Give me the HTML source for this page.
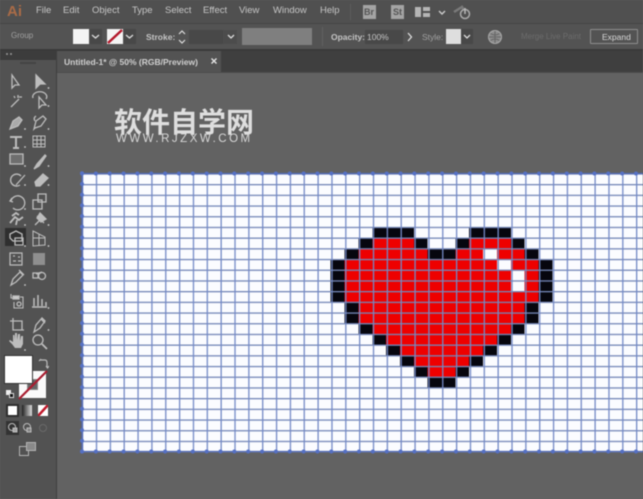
<!DOCTYPE html>
<html><head><meta charset="utf-8">
<style>
html,body{margin:0;padding:0;background:#626262}
#w{width:643px;height:499px;overflow:hidden;position:relative}
#p{position:relative;width:643px;height:499px;overflow:hidden;background:#626262;font-family:"Liberation Sans",sans-serif;color:#c6c6c6;filter:blur(0.5px)}
.r{position:absolute}
.t{position:absolute;white-space:nowrap;font-size:9.5px;line-height:12px}
#fx{position:absolute;left:0;top:0}
</style></head><body><div id="w"><div id="p">
<div class="r" style="left:0;top:0;width:643px;height:23px;background:#505050"></div>
<div class="r" style="left:0;top:23px;width:643px;height:1px;background:#444"></div>
<div class="r" style="left:0;top:24px;width:643px;height:26px;background:#535353"></div>
<div class="r" style="left:0;top:49px;width:643px;height:2px;background:#3a3a3a"></div>
<div class="r" style="left:57px;top:51px;width:586px;height:21px;background:#3f3f3f"></div>
<div class="r" style="left:57px;top:51px;width:164px;height:21px;background:#535353"></div>
<div class="r" style="left:57px;top:72px;width:586px;height:1px;background:#4c4c4c"></div>
<div class="r" style="left:0;top:51px;width:56px;height:448px;background:#525252"></div>
<div class="r" style="left:0;top:51px;width:56px;height:9px;background:#3c3c3c"></div>
<div class="r" style="left:56px;top:51px;width:1px;height:448px;background:#3e3e3e"></div>
<div class="r" style="left:20px;top:62px;width:16px;height:2px;background:#444"></div>

<div class="t" style="left:7px;top:3px;font-size:15px;line-height:18px;font-weight:bold;color:#a96b47">Ai</div>
<div class="t" style="left:36px;top:5px">File</div>
<div class="t" style="left:63px;top:5px">Edit</div>
<div class="t" style="left:92px;top:5px">Object</div>
<div class="t" style="left:132px;top:5px">Type</div>
<div class="t" style="left:165px;top:5px">Select</div>
<div class="t" style="left:203px;top:5px">Effect</div>
<div class="t" style="left:239px;top:5px">View</div>
<div class="t" style="left:273px;top:5px">Window</div>
<div class="t" style="left:320px;top:5px">Help</div>
<div class="r" style="left:350px;top:4px;width:1px;height:16px;background:#5c5c5c"></div>

<div class="r" style="left:363px;top:5px;width:13px;height:14px;background:#a4a4a4"></div>
<div class="t" style="left:364px;top:6px;font-size:9px;font-weight:bold;color:#555">Br</div>
<div class="r" style="left:391px;top:5px;width:13px;height:14px;background:#a4a4a4"></div>
<div class="t" style="left:393px;top:6px;font-size:9px;font-weight:bold;color:#555">St</div>
<svg class="r" style="left:414px;top:5px" width="40" height="14"><path d="M1 2h6v10H1zM9 2h7v4H9zM9 8h7v4H9z" fill="#b5b5b5"/><path d="M25 6l3 3 3-3" fill="none" stroke="#ccc" stroke-width="1.400"/></svg>
<svg class="r" style="left:452px;top:3px" width="22" height="18"><path d="M2 9l8-5 2 3" fill="none" stroke="#7a7a7a" stroke-width="2.500"/><circle cx="13" cy="11" r="4.500" fill="none" stroke="#aaa" stroke-width="1.500"/><path d="M13 5v6" stroke="#bbb" stroke-width="1.500"/></svg>

<div class="t" style="left:11px;top:30px;font-size:8px;color:#a0a0a0">Group</div>
<div class="r" style="left:73px;top:29px;width:16px;height:15px;background:#f4f4f4"></div>
<div class="r" style="left:90px;top:29px;width:12px;height:15px;background:#484848"></div>
<div class="r" style="left:107px;top:29px;width:16px;height:15px;background:#f4f4f4"></div>
<svg class="r" style="left:107px;top:29px" width="16" height="15"><path d="M1 14L15 1" stroke="#b3182a" stroke-width="2.400"/></svg>
<div class="r" style="left:124px;top:29px;width:12px;height:15px;background:#484848"></div>
<svg class="r" style="left:90px;top:33px" width="46" height="8"><path d="M2 2l3.500 3 3.500-3M36 2l3.500 3 3.500-3" fill="none" stroke="#ddd" stroke-width="1.300"/></svg>
<div class="t" style="left:146px;top:31px;font-size:8.500px;font-weight:bold;color:#c4c4c4">Stroke:</div>
<svg class="r" style="left:176px;top:29px" width="12" height="16"><path d="M3 5l3-3 3 3M3 11l3 3 3-3" fill="none" stroke="#ddd" stroke-width="1.200"/></svg>
<div class="r" style="left:189px;top:30px;width:34px;height:14px;background:#484848"></div>
<div class="r" style="left:223px;top:30px;width:14px;height:14px;background:#4c4c4c"></div>
<svg class="r" style="left:226px;top:34px" width="10" height="7"><path d="M2 1l3 3 3-3" fill="none" stroke="#ddd" stroke-width="1.300"/></svg>
<div class="r" style="left:242px;top:28px;width:70px;height:17px;background:#7f7f7f"></div>
<div class="r" style="left:322px;top:27px;width:1px;height:19px;background:#606060"></div>
<div class="t" style="left:331px;top:31px;font-size:8.500px;font-weight:bold;color:#c4c4c4">Opacity:</div>
<div class="r" style="left:365px;top:30px;width:38px;height:14px;background:#484848"></div>
<div class="t" style="left:367px;top:31px;font-size:8.500px;color:#c4c4c4">100%</div>
<svg class="r" style="left:405px;top:32px" width="10" height="10"><path d="M3 1l3.500 4L3 9" fill="none" stroke="#ddd" stroke-width="1.300"/></svg>
<div class="t" style="left:422px;top:31px;font-size:8.500px;color:#a0a0a0">Style:</div>
<div class="r" style="left:446px;top:29px;width:15px;height:15px;background:#dedede"></div>
<div class="r" style="left:461px;top:29px;width:12px;height:15px;background:#484848"></div>
<svg class="r" style="left:462px;top:34px" width="10" height="7"><path d="M2 1l3 3 3-3" fill="none" stroke="#ddd" stroke-width="1.300"/></svg>
<svg class="r" style="left:487px;top:29px" width="16" height="16"><circle cx="8" cy="8" r="6.500" fill="#8d8d8d" stroke="#aaa"/><path d="M8 2v12M2 8h12M3.500 4.500q4.500 3 9 0M3.500 11.500q4.500-3 9 0" fill="none" stroke="#666"/></svg>
<div class="t" style="left:521px;top:31px;font-size:8px;color:#6c6c6c">Merge Live Paint</div>
<div class="r" style="left:590px;top:29px;width:48px;height:15px;border:1px solid #8e8e8e;box-sizing:border-box;border-radius:1px"></div>
<div class="t" style="left:602px;top:31px;font-size:8.500px;color:#d8d8d8">Expand</div>

<div class="t" style="left:64px;top:56px;font-size:8.500px;font-weight:bold;color:#d0d0d0">Untitled-1* @ 50% (RGB/Preview)</div>
<svg class="r" style="left:210px;top:57px" width="8" height="8"><path d="M1.500 1.500l5 5M6.500 1.500l-5 5" stroke="#e5e5e5" stroke-width="1.400"/></svg>
<svg class="r" style="left:5px;top:51px" width="8" height="6"><circle cx="2" cy="3" r="1" fill="#999"/><circle cx="6" cy="3" r="1" fill="#999"/></svg>

<div class="r" style="left:5px;top:228px;width:21px;height:18px;background:#2f2f2f"></div>
<svg class="r" style="left:0;top:70px" width="56" height="300" fill="none" stroke="#bdbdbd" stroke-width="1.300">
<path d="M12 5v13l3-3 4 0z"/><path d="M36 5v13l4-4 5 0z" fill="#bdbdbd"/><circle cx="48.500" cy="18" r=".9" fill="#ccc" stroke="none"/>
<path d="M11 37l8-8M18 25v3M22 27h-3M14 26l1 2"/><path d="M33 28a7 5 0 1 1 13 1M39 27v11l3-3 4 0z"/><circle cx="48.500" cy="36" r=".9" fill="#ccc" stroke="none"/>
<path d="M10 59l3-8 6-4 3 3-4 6z" fill="#aaa"/><path d="M34 59l2-8 7-5 3 3-5 7-6 2zM36 46q-3 2-1 5"/><circle cx="25" cy="59" r=".9" fill="#ccc" stroke="none"/><circle cx="48.500" cy="59" r=".9" fill="#ccc" stroke="none"/>
<path d="M10 67h12M16 67v11M13 78h6" stroke-width="2"/><path d="M33 66h12v11H33zM33 70h12M33 74h12M37 66v11M41 66v11" stroke-width="1"/><circle cx="25" cy="77" r=".9" fill="#ccc" stroke="none"/>
<path d="M10 84h13v10H10z" fill="#6e6e6e"/><path d="M34 99l3-5 8-9 1 1-7 10z" fill="#bdbdbd"/><circle cx="25" cy="96" r=".9" fill="#ccc" stroke="none"/><circle cx="48.500" cy="96" r=".9" fill="#ccc" stroke="none"/>
<path d="M21 106a6 6 0 1 0-1 9M16 115l9-10"/><path d="M35 112l8-8 5 4-8 8-4 0z" fill="#bdbdbd"/><circle cx="25" cy="115" r=".9" fill="#ccc" stroke="none"/><circle cx="48.500" cy="115" r=".9" fill="#ccc" stroke="none"/>
<path d="M12 128l-2 3 3 1M11 131a7 7 0 1 1 2 7"/><path d="M33 130h9v9h-9zM38 124h8v8h-8z"/><circle cx="25" cy="139" r=".9" fill="#ccc" stroke="none"/>
<path d="M10 153l5-6 4 3 4-3M12 146l4-3 3 2M17 150l-1 5" stroke-width="1.800"/><path d="M35 155l5-5M37 146l7 7M40 143l6 6-5 3-4-4z" fill="#bdbdbd"/><circle cx="25" cy="155" r=".9" fill="#ccc" stroke="none"/><circle cx="48.500" cy="155" r=".9" fill="#ccc" stroke="none"/>
<path d="M10 164l6-3 6 3v7H13l-3-3zM15 168h8v7h-8z"/><path d="M33 161l12 6v8l-12 1zM33 168h12M39 164v11" stroke-width="1"/><circle cx="25" cy="176" r=".9" fill="#ccc" stroke="none"/><circle cx="48.500" cy="176" r=".9" fill="#ccc" stroke="none"/>
<path d="M10 183h12v12H10zM13 186h2M18 187h2M13 191h3M18 191h3" stroke-width="1.200"/><rect x="33" y="183" width="12" height="12" fill="#8f8f8f" stroke="none"/>
<path d="M11 215l2-6 7-7 3 3-7 7zM19 200l5 5"/><circle cx="25" cy="215" r=".9" fill="#ccc" stroke="none"/><rect x="33" y="203" width="5" height="5"/><circle cx="42" cy="206" r="3.500"/><path d="M36 204l6-2"/>
<path d="M11 224v4h2M20 227h3v11h-9v-6" stroke-width="1.100"/><circle cx="19" cy="234" r="2"/><rect x="13" y="226" width="6" height="3" fill="#ccc"/>
<path d="M34 236v-8M38 236v-11M42 236v-7M46 236v-4M32 237h15" stroke-width="1.500"/><circle cx="48.500" cy="238" r=".9" fill="#ccc" stroke="none"/>
<path d="M13 248v12h11M10 251h12v9"/><path d="M34 262l2-7 6-7 3 3-5 7zM41 249l4 4"/><circle cx="48.500" cy="260" r=".9" fill="#ccc" stroke="none"/>
<path d="M12 274l-3-3 1-1 3 2v-7h1.500l.5 5v-7h2v7l1-6h2v7l1-5h2v8l-2 4h-6z" fill="#bdbdbd" stroke="none"/><circle cx="25" cy="280" r=".9" fill="#ccc" stroke="none"/>
<circle cx="38" cy="270" r="5"/><path d="M42 274l5 5" stroke-width="1.800"/>
</svg>

<div class="r" style="left:19px;top:371px;width:27px;height:27px;background:#fafafa"></div>
<div class="r" style="left:28px;top:380px;width:9px;height:9px;background:#666;outline:1px solid #888"></div>
<div class="r" style="left:5px;top:356px;width:27px;height:27px;background:#fff;outline:1px solid #333"></div>
<svg class="r" style="left:18px;top:370px" width="30" height="30"><path d="M1 29L29 1" stroke="#a91d30" stroke-width="2.200"/></svg>
<svg class="r" style="left:38px;top:358px" width="11" height="11" fill="none" stroke="#bbb" stroke-width="1.200"><path d="M2 2h5q2 0 2 3v4M1 3l2-2M8 8l1.500 2L11 8"/></svg>
<div class="r" style="left:6px;top:390px;width:5px;height:5px;background:#eee"></div>
<div class="r" style="left:9px;top:393px;width:5px;height:5px;background:#111;border:1px solid #ddd;box-sizing:border-box"></div>

<div class="r" style="left:6px;top:404px;width:13px;height:13px;background:#2e2e2e"></div>
<div class="r" style="left:8px;top:406px;width:9px;height:9px;background:#fff"></div>
<div class="r" style="left:22px;top:405px;width:10px;height:11px;background:linear-gradient(90deg,#222,#ddd)"></div>
<div class="r" style="left:38px;top:405px;width:10px;height:11px;background:#fff"></div>
<svg class="r" style="left:38px;top:405px" width="10" height="11"><path d="M0 11L10 0" stroke="#c01a2c" stroke-width="2.500"/></svg>

<div class="r" style="left:6px;top:421px;width:13px;height:14px;background:#333"></div>
<svg class="r" style="left:6px;top:421px" width="44" height="14" fill="none" stroke="#bcbcbc"><circle cx="6" cy="6" r="3.500"/><rect x="7" y="7" width="4" height="4" fill="#aaa"/><circle cx="21" cy="6" r="3.500"/><rect x="21" y="7" width="4" height="4" fill="#888"/><circle cx="37" cy="7" r="3.500" stroke="#6a6a6a"/></svg>

<svg class="r" style="left:18px;top:441px" width="20" height="16" fill="none" stroke="#b4b4b4"><rect x="1.500" y="5.500" width="9" height="9"/><rect x="8.500" y="1.500" width="9" height="8" fill="#8a8a8a"/></svg>

<div id="fx">
<svg width="643" height="499" style="display:block">
<defs>
<pattern id="g" x="82" y="173.300" width="13.850" height="10.700" patternUnits="userSpaceOnUse">
<rect x="0" y="0" width="13.850" height="1.300" fill="#7487b8"/>
<rect x="0" y="0" width="1.300" height="10.700" fill="#7389c6"/>
</pattern>
</defs>
<rect x="82" y="173" width="561" height="279" fill="#fbfcff"/>
<g transform="translate(330.700,227.700) scale(13.850,10.700)" shape-rendering="crispEdges">
<path fill="#ee0000" d="M3 1h3v1H3zM10 1h3v1h-3zM2 2h5v1H2zM9 2h2v1H9zM12 2h2v1h-2zM1 3h11v1H1zM13 3h2v1h-2zM1 4h12v2H1zM14 4h1v2h-1zM1 6h14v1H1zM2 7h12v2H2zM3 9h10v1H3zM4 10h8v1H4zM5 11h6v1H5zM6 12h4v1H6zM7 13h2v1H7z"/>
<path fill="#06060e" d="M3 0h3v1H3zM10 0h3v1h-3zM2 1h1v1H2zM6 1h1v1H6zM9 1h1v1H9zM13 1h1v1h-1zM1 2h1v1H1zM7 2h2v1H7zM14 2h1v1h-1zM0 3h1v4H0zM15 3h1v4h-1zM1 7h1v2H1zM14 7h1v2h-1zM2 9h1v1H2zM13 9h1v1h-1zM3 10h1v1H3zM12 10h1v1h-1zM4 11h1v1H4zM11 11h1v1h-1zM5 12h1v1H5zM10 12h1v1h-1zM6 13h1v1H6zM9 13h1v1H9zM7 14h2v1H7z"/>
</g>
<rect x="82" y="173" width="562" height="279.500" fill="url(#g)"/>
<path d="M82 173v278.500M82 173.500h561M82 451.500h561" fill="none" stroke="#5067b0" stroke-width="1.300"/>
<path d="M82 173.500h561M82 451.500h561" fill="none" stroke="#5570c4" stroke-width="4" stroke-linecap="round" stroke-dasharray="0 13.850"/>
<path d="M82 173.300v278.500" fill="none" stroke="#5570c4" stroke-width="4" stroke-linecap="round" stroke-dasharray="0 10.700"/>
</svg>
</div>

<div class="t" style="left:114px;top:106px;font-family:'Liberation Sans','Noto Sans CJK SC',sans-serif;font-weight:bold;font-size:28px;line-height:34px;color:#dedede">软件自学网</div>
<div class="t" style="left:116px;top:133px;font-size:11.500px;line-height:13px;letter-spacing:2.500px;color:#d8d8d8">WWW.RJZXW.COM</div>
</div></div></body></html>
